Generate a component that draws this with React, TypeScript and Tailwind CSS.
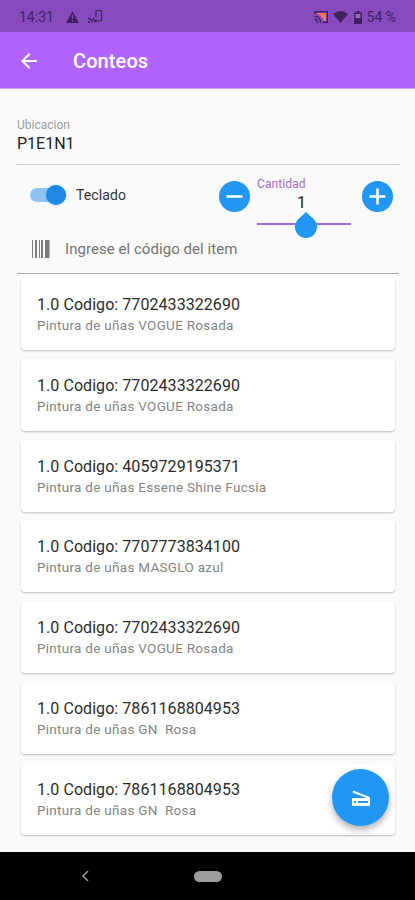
interface Item {
  code: string;
  name: string;
}

const items: Item[] = [
  { code: "7702433322690", name: "Pintura de uñas VOGUE Rosada" },
  { code: "7702433322690", name: "Pintura de uñas VOGUE Rosada" },
  { code: "4059729195371", name: "Pintura de uñas Essene Shine Fucsia" },
  { code: "7707773834100", name: "Pintura de uñas MASGLO azul" },
  { code: "7702433322690", name: "Pintura de uñas VOGUE Rosada" },
  { code: "7861168804953", name: "Pintura de uñas GN  Rosa" },
  { code: "7861168804953", name: "Pintura de uñas GN  Rosa" },
];

const StatusBar = () => (
  <div className="flex h-8 shrink-0 items-center bg-[#874bbd] pt-0.5 pl-[19px] pr-[19px] text-[#40215f]">
    <span className="w-[35px] text-[14px] leading-4 whitespace-nowrap">14:31</span>
    <svg className="ml-3 h-[12px] w-[13px]" viewBox="0 0 13 12">
      <path d="M6.5 0 13 12H0z" fill="currentColor" />
      <path d="M6.5 4v4M6.5 9v1.4" stroke="#874bbd" strokeWidth="1" />
    </svg>
    <svg className="mb-[2px] ml-[9px] h-[15px] w-[15px]" viewBox="0 0 15 15" fill="none" stroke="currentColor">
      <path d="M8 8V2.5q0-1 1-1h3.5q1 0 1 1V11q0 1-1 1H9" strokeWidth="1.2" />
      <path d="M0 9.5q4 0 4 4M0 12.5q1.5 0 1.5 1.5M4.5 9.5q2.5 1 2.5 4M8 10v3" strokeWidth="1.4" />
    </svg>
    <div className="ml-auto flex items-center">
      <svg className="h-[12px] w-[14px]" viewBox="0 0 14 12">
        <path d="M.7 3V.7h12.6v10.6H8.5" fill="none" stroke="currentColor" strokeWidth="1.4" />
        <path d="M2.5 2H12v8h-2Q8 5 2.5 2z" fill="#f4775c" />
        <path d="M.5 5.2q6 .5 6 6.3M.5 8q3 .3 3 3.5" fill="none" stroke="currentColor" strokeWidth="1.3" />
      </svg>
      <svg className="ml-[5px] h-[12px] w-[15px]" viewBox="0 0 15 12">
        <path d="M0 3Q7.5-3 15 3L7.5 12z" fill="currentColor" />
      </svg>
      <svg className="ml-[6px] h-[13px] w-[8px]" viewBox="0 0 8 13">
        <path d="M2.5 0h3v1.5H8V13H0V1.5h2.5z" fill="currentColor" />
        <path d="M1.500 3h5v4h-5z" fill="#9a6bc4" />
      </svg>
      <span className="ml-[5px] text-[14px] leading-4 whitespace-nowrap">54 %</span>
    </div>
  </div>
);

const AppBar = () => (
  <header className="flex h-[57px] shrink-0 items-center border-b border-[#cda7f5] bg-[#b163ff] pt-0.5 pl-[17px] text-white">
    <svg className="h-6 w-6" viewBox="0 0 24 24" fill="currentColor">
      <path d="M20 11H7.83l5.59-5.59L12 4l-8 8 8 8 1.41-1.41L7.83 13H20z" />
    </svg>
    <h1 className="ml-8 text-[20px] font-medium leading-6 tracking-[0.1px]">Conteos</h1>
  </header>
);

const RoundButton = ({ plus = false }: { plus?: boolean }) => (
  <button className="mt-[16px] h-[31px] w-[31px] shrink-0 rounded-full bg-[#2196f3]">
    <svg viewBox="0 0 31 31" stroke="#fff" strokeWidth="2.6">
      <path d={plus ? "M7.5 15.5h16M15.5 7.5v16" : "M7.5 15.5h16"} />
    </svg>
  </button>
);

const Barcode = () => (
  <svg className="h-[18px] w-[18px]" viewBox="0 0 18 18" fill="#7c7c7c">
    <path d="M0 0h1v18H0zM3 0h2v18H3zM7 0h1v18H7zM9 0h2v18H9zM13 0h1v18h-1zM14 0h3.500v18H14z" />
  </svg>
);

const ItemCard = ({ code, name }: Item) => (
  <li className="h-[72px] shrink-0 rounded-[4px] bg-white pt-[16px] pl-4 shadow-[0_1px_2px_rgba(0,0,0,0.25)]">
    <p className="text-[16px] leading-[22px] tracking-[0.06px] text-[#2c2c2c]">1.0 Codigo: {code}</p>
    <p className="text-[13.5px] leading-[18px] tracking-[0.28px] whitespace-pre text-[#848484]">{name}</p>
  </li>
);

export default function App() {
  return (
    <div className="relative flex h-[900px] w-[415px] flex-col overflow-hidden bg-[#fafafa] font-[Roboto,sans-serif]">
      <StatusBar />
      <AppBar />

      <main className="flex min-h-0 flex-1 flex-col">
        <div className="mr-4 ml-[17px] h-[76px] shrink-0 border-b border-[#cfcfcf] pt-[28px]">
          <p className="text-[12px] leading-4 text-[#9b9b9b]">Ubicacion</p>
          <p className="pt-px text-[16px] leading-5 text-[#222]">P1E1N1</p>
        </div>

        <div className="mr-4 ml-[17px] h-[109px] shrink-0 border-b border-[#a8a8a8]">
          <div className="flex h-[70px] pl-[13px]">
            <div className="flex h-[60px] w-[189px] items-center">
              <div className="flex h-[14px] w-[36px] items-center justify-end rounded-full bg-[#91c4f3]">
                <div className="h-[20px] w-[20px] shrink-0 rounded-full bg-[#1e88e5] shadow-[0_0_2px_rgba(30,136,229,0.5)]" />
              </div>
              <span className="ml-[10px] text-[14px] leading-5 tracking-[0.1px] text-[#333]">Teclado</span>
            </div>
            <RoundButton />
            <div className="relative ml-[7px] h-[60px] w-[94px] border-b-2 border-[#a469dc] pt-[11px]">
              <p className="text-[12px] leading-4 tracking-[0.1px] text-[#a66bd6]">Cantidad</p>
              <p className="pt-px pr-[5px] text-center text-[16px] leading-[20px] text-[#222]">1</p>
              <svg className="absolute top-[47px] left-[38px] h-[26px] w-[22px]" viewBox="0 0 22 26">
                <path d="M11 0 18.8 7.2A11 11 0 1 1 3.2 7.2Z" fill="#2196f3" />
              </svg>
            </div>
            <div className="ml-[11px] flex">
              <RoundButton plus />
            </div>
          </div>
          <div className="flex h-[28px] items-center pl-[15px]">
            <Barcode />
            <span className="ml-[15px] text-[15px] leading-5 tracking-[0.05px] text-[#747474]">Ingrese el código del item</span>
          </div>
        </div>

        <ul className="flex min-h-0 flex-1 flex-col gap-[8.8px] overflow-hidden pt-1 pr-[20px] pl-[21px]">
          {items.map((item, i) => (
            <ItemCard key={i} {...item} />
          ))}
        </ul>
      </main>

      <nav className="flex h-12 shrink-0 items-center bg-black pl-[80px]">
        <svg className="h-[12px] w-[10px]" viewBox="0 0 10 12" fill="none" stroke="#a0a0a0" strokeWidth="1.5">
          <path d="M8 1 3 6l5 5" />
        </svg>
        <div className="ml-[104px] h-[11px] w-[28px] rounded-full bg-[#9c9c9c]" />
      </nav>

      {/* Scan button */}
      <button className="absolute top-[769px] left-[332px] flex h-[57px] w-[57px] items-center justify-center rounded-full bg-[#2196f3] shadow-[0_4px_7px_rgba(0,0,0,0.3)]">
        <svg className="h-6 w-6" viewBox="0 0 24 24" fill="#fff">
          <path
            fillRule="evenodd"
            d="M4.200 4.500 20 10.800q1 .5 1 1.700V19q0 1-1 1H4q-1 0-1-1v-6q0-1 1-1h13.500L3.500 6.400zM5 15v2h2v-2zM9 15v2h10v-2z"
          />
        </svg>
      </button>
    </div>
  );
}
